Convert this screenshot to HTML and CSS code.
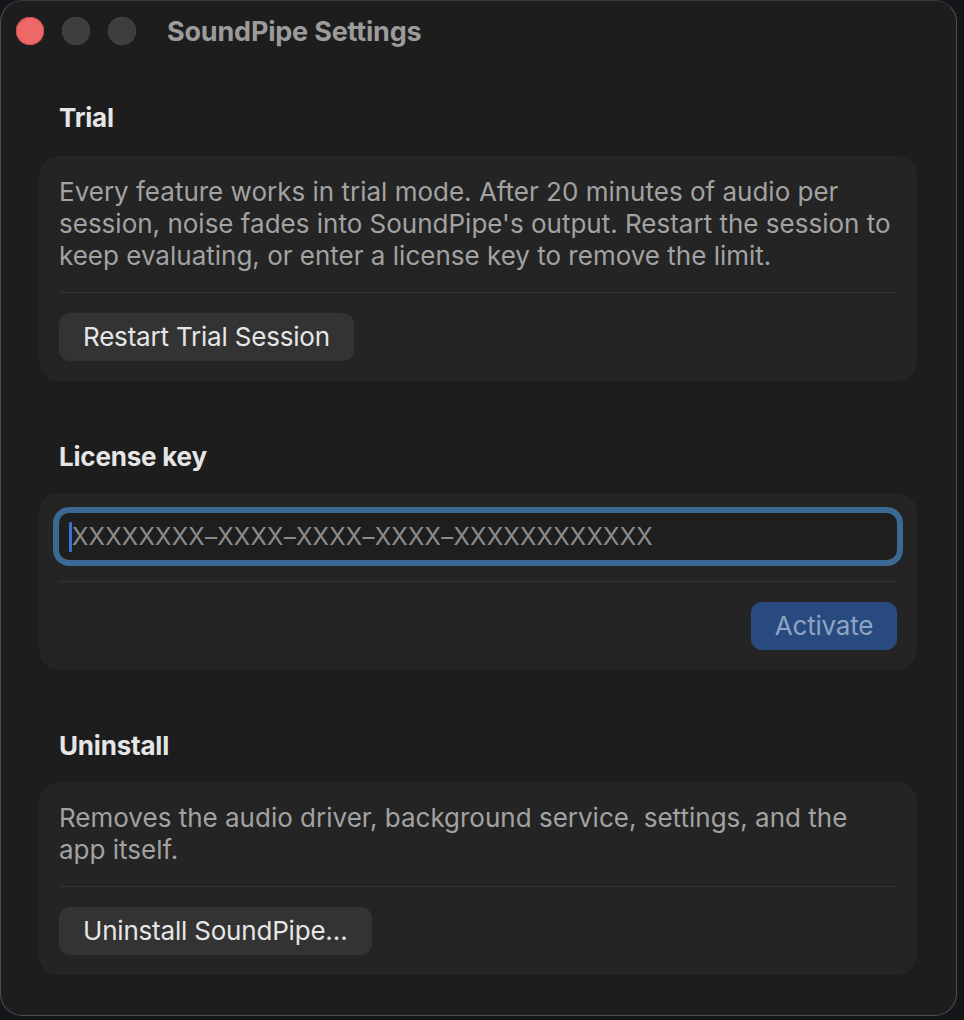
FILE: index.html
```html
<!DOCTYPE html>
<html lang="en">
<head>
<meta charset="utf-8">
<title>SoundPipe Settings</title>
<link rel="stylesheet" href="styles.css">
</head>
<body>
<div class="window">
  <header class="titlebar">
    <div class="lights">
      <span class="light close"></span>
      <span class="light off"></span>
      <span class="light off"></span>
    </div>
    <div class="title">SoundPipe Settings</div>
  </header>
  <main class="content">
    <section class="section">
      <h2 class="heading">Trial</h2>
      <div class="card">
        <p class="text">Every feature works in trial mode. After 20 minutes of audio per session, noise fades into SoundPipe's output. Restart the session to keep evaluating, or enter a license key to remove the limit.</p>
        <div class="divider"></div>
        <div class="row"><button class="btn">Restart Trial Session</button></div>
      </div>
    </section>
    <section class="section">
      <h2 class="heading">License key</h2>
      <div class="card">
        <div class="field"><span class="caret"></span><span class="placeholder">XXXXXXXX–XXXX–XXXX–XXXX–XXXXXXXXXXXX</span></div>
        <div class="divider"></div>
        <div class="row end"><button class="btn primary">Activate</button></div>
      </div>
    </section>
    <section class="section">
      <h2 class="heading">Uninstall</h2>
      <div class="card">
        <p class="text">Removes the audio driver, background service, settings, and the app itself.</p>
        <div class="divider"></div>
        <div class="row"><button class="btn">Uninstall SoundPipe…</button></div>
      </div>
    </section>
  </main>
</div>
</body>
</html>
```
FILE: styles.css
```css
* { box-sizing: border-box; }
html, body {
  margin: 0;
  padding: 0;
  background: #14161a;
  width: 964px;
  height: 1020px;
  overflow: hidden;
}
body {
  font-family: Inter, "Noto Sans", "Liberation Sans", sans-serif;
  -webkit-font-smoothing: antialiased;
}
.window {
  width: 957px;
  height: 1016px;
  background: #1d1d1d;
  border: 1px solid #4e4e4e;
  border-top-color: #3a3a3a;
  border-radius: 22px;
  display: flex;
  flex-direction: column;
  overflow: hidden;
}
.titlebar {
  height: 62px;
  display: flex;
  align-items: center;
  padding-left: 15px;
  padding-bottom: 2px;
  flex-shrink: 0;
}
.lights {
  display: flex;
  gap: 18px;
}
.light {
  width: 28px;
  height: 28px;
  border-radius: 50%;
  display: block;
}
.light.close {
  background: #ee6868;
  box-shadow: inset 0 0 0 1px #d14f4f;
}
.light.off {
  background: #3d3d3d;
  box-shadow: inset 0 0 0 1px #444;
}
.title {
  margin-left: 31px;
  font-size: 27px;
  font-weight: 700;
  color: #9b9b9b;
  letter-spacing: -0.2px;
}
.content {
  padding: 39px 39px 0 38px;
  display: flex;
  flex-direction: column;
  gap: 58px;
}
.heading {
  margin: 0 0 22px 20px;
  font-size: 26px;
  line-height: 32px;
  font-weight: 700;
  color: #e6e6e6;
  letter-spacing: -0.2px;
}
.section + .section .heading {
  margin-top: 2px;
  margin-bottom: 20px;
}
.card {
  background: #242424;
  border-radius: 20px;
  padding: 20px;
  display: flex;
  flex-direction: column;
  gap: 20px;
}
.text {
  margin: 0;
  font-size: 26px;
  line-height: 32px;
  color: #a2a2a2;
  letter-spacing: 0;
}
.divider {
  height: 1px;
  background: #343434;
}
.row {
  display: flex;
}
.row.end {
  justify-content: flex-end;
}
.btn {
  font-family: inherit;
  font-size: 26px;
  line-height: 48px;
  height: 48px;
  padding: 0 24px;
  border: none;
  border-radius: 11px;
  background: #333333;
  color: #e6e6e6;
  letter-spacing: -0.2px;
}
.btn.primary {
  background: #284a7e;
  color: #8fa3c5;
  width: 146px;
  padding: 0;
}
.field {
  height: 47px;
  margin-bottom: 1px;
  background: #1e1e1e;
  border-radius: 10px;
  outline: 6px solid #3b6994;
  display: flex;
  align-items: center;
  padding-left: 10px;
}
.caret {
  width: 3px;
  height: 30px;
  background: #3b6fd6;
  border-radius: 1px;
}
.placeholder {
  font-size: 24px;
  color: #8c8c8c;
  letter-spacing: 0.25px;
}
```
